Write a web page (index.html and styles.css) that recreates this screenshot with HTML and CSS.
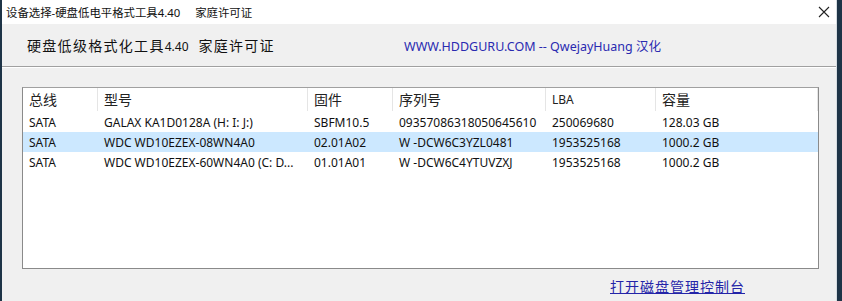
FILE: index.html
```html
<!DOCTYPE html>
<html lang="zh-CN">
<head>
    <meta charset="UTF-8">
    <title>设备选择-硬盘低电平格式工具4.40</title>
    <link rel="stylesheet" href="styles.css">
</head>
<body>
    <div class="window">
        <div class="titlebar">
            <span class="title">设备选择-硬盘低电平格式工具4.40&nbsp;&nbsp;&nbsp;&nbsp;&nbsp;家庭许可证</span>
            <svg class="close" width="12" height="12" viewBox="0 0 12 12">
                <path d="M1 1 L11 11 M11 1 L1 11" stroke="#222" stroke-width="1.1" fill="none"/>
            </svg>
        </div>

        <div class="header">
            <span class="app-name">硬盘低级格式化工具<small>4.40</small>&nbsp; 家庭许可证</span>
            <span class="credit">WWW.HDDGURU.COM -- QwejayHuang 汉化</span>
        </div>

        <div class="content">
            <div class="list">
                <div class="row head">
                    <div class="cell">总线</div>
                    <div class="cell">型号</div>
                    <div class="cell">固件</div>
                    <div class="cell">序列号</div>
                    <div class="cell lba">LBA</div>
                    <div class="cell">容量</div>
                </div>
                <div class="row">
                    <div class="cell">SATA</div>
                    <div class="cell">GALAX KA1D0128A (H: I: J:)</div>
                    <div class="cell">SBFM10.5</div>
                    <div class="cell">09357086318050645610</div>
                    <div class="cell">250069680</div>
                    <div class="cell">128.03 GB</div>
                </div>
                <div class="row selected">
                    <div class="cell">SATA</div>
                    <div class="cell">WDC WD10EZEX-08WN4A0</div>
                    <div class="cell">02.01A02</div>
                    <div class="cell">W -DCW6C3YZL0481</div>
                    <div class="cell">1953525168</div>
                    <div class="cell">1000.2 GB</div>
                </div>
                <div class="row">
                    <div class="cell">SATA</div>
                    <div class="cell">WDC WD10EZEX-60WN4A0 (C: D...</div>
                    <div class="cell">01.01A01</div>
                    <div class="cell">W -DCW6C4YTUVZXJ</div>
                    <div class="cell">1953525168</div>
                    <div class="cell">1000.2 GB</div>
                </div>
            </div>

            <div class="footer">
                <a href="#" class="disk-link">打开磁盘管理控制台</a>
            </div>
        </div>
    </div>
</body>
</html>
```

FILE: styles.css
```css
body {
    margin: 0;
    font-family: "Noto Sans", "Noto Sans CJK SC", sans-serif;
    background-color: #1e3447;
}

.window {
    width: 834px;
    height: 301px;
    margin-left: 2px;
    border-right: 1px solid #d6dde2;
    background-color: #f0f0f0;
    overflow: hidden;
}

.titlebar {
    height: 24px;
    background: white;
    display: flex;
    align-items: center;
    justify-content: space-between;
    padding: 0 6px 0 4px;
}

.title {
    font-size: 11.4px;
    color: #111;
}

.header {
    height: 42px;
    display: flex;
    align-items: center;
    border-bottom: 1px solid #a0a0a0;
    box-shadow: 0 1px 0 white;
}

.app-name {
    margin-left: 25px;
    width: 377px;
    font-size: 14px;
    letter-spacing: 1.3px;
    color: #111;
}

.app-name small {
    font-size: 12px;
    letter-spacing: 0;
}

.credit {
    font-size: 12.5px;
    color: #2a2ab0;
}

.content {
    padding: 20px 0 0 20px;
}

.list {
    width: 795px;
    height: 180px;
    background: white;
    border: 1px solid #8a8a8a;
    border-top-color: #a0a0a0;
    font-size: 12px;
    color: #111;
}

.row {
    display: grid;
    grid-template-columns: 75px 210px 85px 153px 110px 1fr;
    height: 20px;
    align-items: center;
}

.row.head {
    height: 23px;
    margin-bottom: 1px;
    font-size: 14px;
    color: #222;
}

.row.head .cell {
    border-right: 1px solid #e5e5e5;
    height: 23px;
    line-height: 23px;
}

.row.head .lba {
    font-size: 12px;
}

.cell {
    padding-left: 6px;
    white-space: nowrap;
    overflow: hidden;
}

.row.selected {
    background-color: #cce8ff;
}

.footer {
    display: flex;
    justify-content: flex-end;
    padding: 7px 91px 0 0;
}

.disk-link {
    font-size: 14px;
    letter-spacing: 1px;
    color: #2424a8;
}
```
